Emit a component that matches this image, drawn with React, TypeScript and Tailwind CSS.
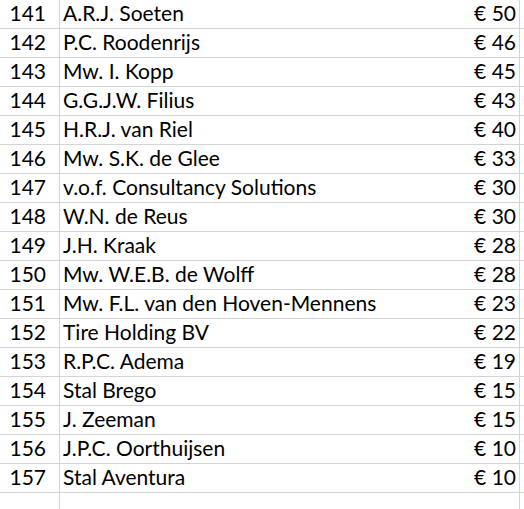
const rows: [number, string, number][] = [
  [141, "A.R.J. Soeten", 50],
  [142, "P.C. Roodenrijs", 46],
  [143, "Mw. I. Kopp", 45],
  [144, "G.G.J.W. Filius", 43],
  [145, "H.R.J. van Riel", 40],
  [146, "Mw. S.K. de Glee", 33],
  [147, "v.o.f. Consultancy Solutions", 30],
  [148, "W.N. de Reus", 30],
  [149, "J.H. Kraak", 28],
  [150, "Mw. W.E.B. de Wolff", 28],
  [151, "Mw. F.L. van den Hoven-Mennens", 23],
  [152, "Tire Holding BV", 22],
  [153, "R.P.C. Adema", 19],
  [154, "Stal Brego", 15],
  [155, "J. Zeeman", 15],
  [156, "J.P.C. Oorthuijsen", 10],
  [157, "Stal Aventura", 10],
];

export default function App() {
  return (
    <div className="w-[524px] h-[509px] overflow-hidden bg-white text-black font-['Lato',sans-serif] text-[21px]">
      {rows.map(([nr, name, amount]) => (
        <div key={nr} className="flex h-[29px] border-b border-[#d4d4d4]">
          <div className="w-[60px] border-r border-[#d4d4d4] flex items-center justify-end pr-[13px] pb-[3px]">{nr}</div>
          <div className="w-[460px] border-r border-[#d4d4d4] flex items-center justify-between pl-[3px] pr-[3px] pb-[3px]">
            <span>{name}</span>
            <span>€ {amount}</span>
          </div>
        </div>
      ))}
      <div className="flex h-[29px]">
        <div className="w-[60px] border-r border-[#d4d4d4]" />
        <div className="w-[460px] border-r border-[#d4d4d4]" />
      </div>
    </div>
  );
}
